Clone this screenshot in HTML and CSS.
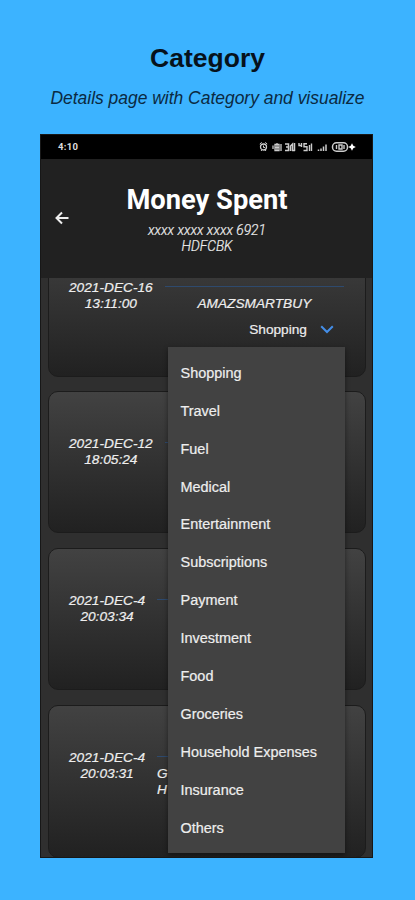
FILE: index.html
```html
<!DOCTYPE html>
<html>
<head>
	<meta charset="UTF-8">
	<title>Category</title>
	<link rel="stylesheet" href="styles.css">
</head>
<body>
	<h1 class="title">Category</h1>
	<p class="subtitle">Details page with Category and visualize</p>
	<div class="phone">
		<div class="status">
			<span class="time">4:10</span>
			<svg class="icons" width="98" height="12" viewBox="0 0 98 12" fill="none" stroke="#ccc">
				<!-- alarm -->
				<circle cx="5.500" cy="6" r="3" stroke-width="1.300"/>
				<path d="M1.800 3l2-1.600M9.200 3l-2-1.600M5.500 4.500v2H7M3 10l1-1.200M8 10L7 8.800"/>
				<!-- vibrate -->
				<path d="M15 4.500v3.500M17 3.500h4v6h-4zM19 2v8M23 3v7M17 6.500h4" stroke-width="1.300"/>
				<!-- network speed -->
				<path d="M27 3h3.500v6.500H27M28 6h2.500M32.500 10V5l2-2v7M36.500 2v8M34 9.500h3" stroke-width="1.500"/>
				<!-- mobile signals -->
				<path d="M41 2v2.500h3M43.500 2v4M49 2.700h-3v3h3v3.800h-3.500M51.500 10V4M53.500 10V2.500" stroke-width="1.400"/>
				<path d="M60.500 10V8.500M63 10V7.500M65.500 10V5.500M68 10V3.500" stroke-width="1.500"/>
				<!-- battery -->
				<rect x="74.500" y="1.800" width="15" height="8.400" rx="4" stroke-width="1.500"/>
				<path d="M78.500 4v4M81 4h3v4h-3zM86 4v4" stroke-width="1.400"/>
				<path d="M94 2.200l1.300 2.500 2.500 1.300-2.500 1.300L94 9.800l-1.300-2.500L90.200 6l2.500-1.300z" fill="#fff" stroke="none"/>
			</svg>
		</div>
		<div class="header">
			<svg class="back" width="14" height="14" viewBox="0 0 14 14" fill="none" stroke="#eee" stroke-width="2">
				<path d="M13.500 7H1.500M7 1.500L1.500 7 7 12.500"/>
			</svg>
			<div class="account">
				<h2>Money Spent</h2>
				<p>xxxx xxxx xxxx 6921<br>HDFCBK</p>
			</div>
		</div>
		<div class="list">
			<div class="card">
				<div class="date">2021-DEC-16<br>13:11:00</div>
				<div class="detail">
					<div class="merchant">AMAZSMARTBUY</div>
					<div class="select">
						<span>Shopping</span>
						<svg width="14" height="9" viewBox="0 0 14 9" fill="none" stroke="#448ee8" stroke-width="2">
							<path d="M1.200 1.200L7 7l5.800-5.800"/>
						</svg>
					</div>
				</div>
			</div>
			<div class="card">
				<div class="date">2021-DEC-12<br>18:05:24</div>
				<div class="detail"></div>
			</div>
			<div class="card">
				<div class="date">2021-DEC-4<br>20:03:34</div>
				<div class="detail"></div>
			</div>
			<div class="card">
				<div class="date">2021-DEC-4<br>20:03:31</div>
				<div class="detail">
					<div class="merchant left">G<br>H</div>
				</div>
			</div>
		</div>
		<div class="menu">
			<a>Shopping</a>
			<a>Travel</a>
			<a>Fuel</a>
			<a>Medical</a>
			<a>Entertainment</a>
			<a>Subscriptions</a>
			<a>Payment</a>
			<a>Investment</a>
			<a>Food</a>
			<a>Groceries</a>
			<a>Household Expenses</a>
			<a>Insurance</a>
			<a>Others</a>
		</div>
	</div>
</body>
</html>
```
FILE: styles.css
```css
*{
	margin: 0;
	padding: 0;
	box-sizing: border-box;
}
body{
	height: 900px;
	padding-top: 42px;
	overflow: hidden;
	background: #3cb3ff;
	font-family: "Liberation Sans", Arial, sans-serif;
}
.title{
	font-size: 26.500px;
	line-height: 32px;
	text-align: center;
	color: #06121c;
}
.subtitle{
	margin-top: 13px;
	font-size: 17.450px;
	line-height: 22px;
	font-style: italic;
	text-align: center;
	color: #0b2a42;
}
.phone{
	position: relative;
	display: flex;
	flex-direction: column;
	width: 333px;
	height: 724px;
	margin: 25px 0 0 40px;
	overflow: hidden;
	background: #2f2f2f;
	border: 1px solid #171717;
	color: #eee;
}
.status{
	display: flex;
	flex: none;
	justify-content: space-between;
	align-items: center;
	height: 24px;
	padding: 0 16px 0 17px;
	background: #000;
}
.time{
	font: bold 9.500px/12px Roboto, sans-serif;
	letter-spacing: .3px;
	color: #ddd;
}
.header{
	display: flex;
	flex: none;
	height: 119px;
	padding-left: 14px;
	background: #212121;
}
.back{
	margin-top: 52px;
}
.account{
	flex: 1;
	padding: 24px 27px 0 0;
	font-family: Roboto, sans-serif;
	text-align: center;
}
.account h2{
	font-size: 27.300px;
	line-height: 34px;
	color: #fff;
}
.account p{
	margin-top: 5px;
	font-size: 13.800px;
	line-height: 16px;
	font-style: italic;
	font-weight: 300;
	-webkit-text-stroke: .2px;
}
.list{
	flex: 1;
	padding: 0 6px 0 7px;
	overflow: hidden;
}
.card{
	display: flex;
	height: 142px;
	margin-bottom: 14.700px;
	padding: 44px 21px 0 20px;
	border: 1px solid #1c1c1c;
	border-radius: 10px;
	background: linear-gradient(#424242, #212121);
	font-size: 13.700px;
	line-height: 16px;
	font-style: italic;
	-webkit-text-stroke: .2px;
}
.card:first-child{
	margin-top: -43.500px;
}
.card:last-child{
	height: 153px;
}
.date{
	margin-right: 12px;
	text-align: center;
}
.detail{
	flex: 1;
	height: 1px;
	margin-top: 6px;
	background: #2e4a6e;
}
.merchant{
	margin-top: 10px;
	text-align: center;
}
.left{
	text-align: left;
}
.select{
	display: flex;
	justify-content: flex-end;
	align-items: center;
	gap: 13px;
	margin-top: 10px;
	padding-right: 10px;
	font-style: normal;
}
.menu{
	position: absolute;
	left: 127px;
	top: 212px;
	width: 177px;
	height: 506px;
	padding: 6.700px 0 6px 12.500px;
	background: #424242;
	box-shadow: 0 2px 5px rgba(0,0,0,.45);
}
.menu a{
	display: block;
	height: 37.950px;
	font-size: 14.450px;
	line-height: 38px;
	-webkit-text-stroke: .2px;
}
```
